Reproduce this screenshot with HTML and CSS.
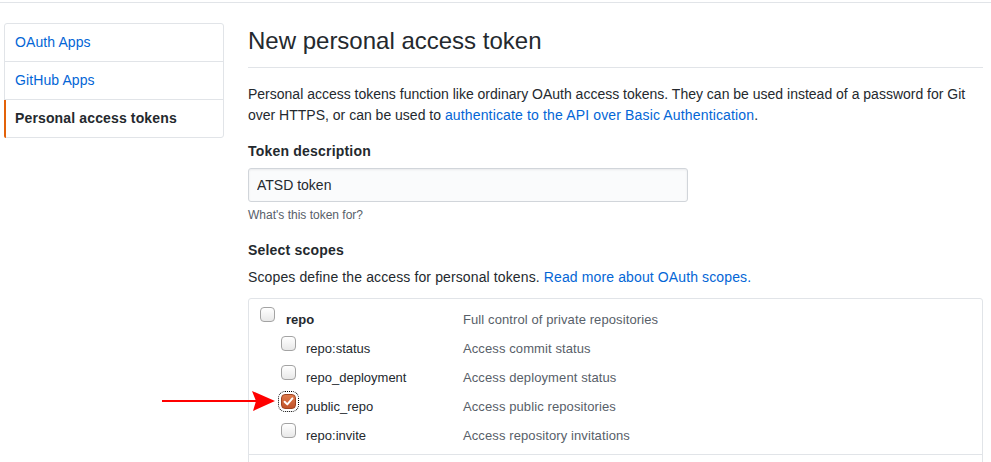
FILE: index.html
```html
<!DOCTYPE html>
<html lang="en">
<head>
<meta charset="utf-8">
<title>New personal access token</title>
<link rel="stylesheet" href="styles.css">
</head>
<body>
<div class="topbar"></div>
<div class="layout">
  <nav class="menu">
    <a class="menu-item" href="#">OAuth Apps</a>
    <a class="menu-item" href="#">GitHub Apps</a>
    <a class="menu-item selected" href="#">Personal access tokens</a>
  </nav>
  <main class="content">
    <h2 class="subhead">New personal access token</h2>
    <p class="intro">Personal access tokens function like ordinary OAuth access tokens. They can be used instead of a password for Git over HTTPS, or can be used to <a class="intro-link" href="#">authenticate to the API over Basic Authentication</a>.</p>
    <label class="field-label" for="desc">Token description</label>
    <input class="field-input" id="desc" type="text" value="ATSD token">
    <p class="note">What's this token for?</p>
    <h3 class="scopes-title">Select scopes</h3>
    <p class="scopes-desc">Scopes define the access for personal tokens. <a href="#">Read more about OAuth scopes.</a></p>
    <div class="scopes">
      <div class="scope-group">
        <div class="scope-row">
          <div class="scope-name"><span class="cb"></span><span class="label-parent">repo</span></div>
          <div class="scope-desc">Full control of private repositories</div>
        </div>
        <div class="scope-row sub">
          <div class="scope-name"><span class="cb"></span><span>repo:status</span></div>
          <div class="scope-desc">Access commit status</div>
        </div>
        <div class="scope-row sub">
          <div class="scope-name"><span class="cb"></span><span>repo_deployment</span></div>
          <div class="scope-desc">Access deployment status</div>
        </div>
        <div class="scope-row sub">
          <div class="scope-name"><span class="cb checked"><svg width="11" height="11" viewBox="0 0 11 11"><polyline points="1.6,5.8 4.3,8.4 9.4,2.4" fill="none" stroke="#fff" stroke-width="2" stroke-linecap="round" stroke-linejoin="round"/></svg></span><span>public_repo</span></div>
          <div class="scope-desc">Access public repositories</div>
        </div>
        <div class="scope-row sub">
          <div class="scope-name"><span class="cb"></span><span>repo:invite</span></div>
          <div class="scope-desc">Access repository invitations</div>
        </div>
      </div>
      <div class="scope-group scope-group-next"></div>
    </div>
  </main>
</div>
<svg class="arrow" width="120" height="30" viewBox="0 0 120 30">
  <line x1="4" y1="15" x2="98" y2="15" stroke="#ff0000" stroke-width="2.2"/>
  <polygon points="94,5 117,15 95,25 98,15" fill="#ff0000"/>
</svg>
</body>
</html>
```
FILE: styles.css
```css
html, body {
  margin: 0;
  padding: 0;
  background: #fff;
}
body {
  position: relative;
  font-family: "Liberation Sans", Arial, Helvetica, sans-serif;
  font-size: 14px;
  line-height: 21px;
  color: #24292e;
  height: 462px;
  overflow: hidden;
}
a {
  color: #0366d6;
  text-decoration: none;
}
.topbar {
  height: 2px;
  border-bottom: 1px solid #e1e4e8;
}
.layout {
  display: flex;
  align-items: flex-start;
  gap: 24px;
  padding: 20px 8px 0 4px;
}
.menu {
  width: 220px;
  flex: none;
  box-sizing: border-box;
  border: 1px solid #e1e4e8;
  border-radius: 3px;
  display: flex;
  flex-direction: column;
}
.menu-item {
  position: relative;
  display: block;
  padding: 8px 10px;
  line-height: 21px;
  font-size: 14px;
  color: #0366d6;
  letter-spacing: 0.1px;
}
.menu-item + .menu-item {
  border-top: 1px solid #e1e4e8;
}
.menu-item.selected {
  color: #24292e;
  font-weight: bold;
  letter-spacing: 0.14px;
}
.menu-item.selected::before {
  content: "";
  position: absolute;
  left: -1px;
  top: 0;
  bottom: -1px;
  width: 2px;
  background: #e36209;
  border-bottom-left-radius: 3px;
}
.content {
  width: 735px;
  flex: none;
}
.subhead {
  margin: 0 0 16px;
  padding-bottom: 8px;
  font-size: 24px;
  line-height: 36px;
  font-weight: normal;
  border-bottom: 1px solid #e1e4e8;
}
.intro {
  margin: 0 0 15px;
}
.intro-link {
  letter-spacing: 0.15px;
}
.field-label {
  display: block;
  font-weight: bold;
  margin-bottom: 6px;
  letter-spacing: 0.2px;
}
.field-input {
  display: block;
  box-sizing: border-box;
  width: 440px;
  height: 34px;
  margin: 0;
  padding: 6px 8px;
  font-family: "Liberation Sans", Arial, Helvetica, sans-serif;
  font-size: 14px;
  color: #24292e;
  background: #fafbfc;
  border: 1px solid #d1d5da;
  border-radius: 3px;
  box-shadow: inset 0 1px 2px rgba(27, 31, 35, 0.075);
  outline: none;
}
.note {
  margin: 4px 0 0;
  font-size: 12px;
  line-height: 18px;
  color: #586069;
}
.scopes-title {
  margin: 16px 0 6px;
  font-size: 14px;
  line-height: 21px;
  font-weight: bold;
  letter-spacing: 0.2px;
}
.scopes-desc {
  margin: 0 0 10px;
  letter-spacing: 0.12px;
}
.scopes {
  border: 1px solid #e1e4e8;
  border-radius: 3px;
}
.scope-group {
  padding: 6px 0 4px;
}
.scope-group + .scope-group {
  border-top: 1px solid #e1e4e8;
}
.scope-group-next {
  height: 40px;
  box-sizing: border-box;
}
.scope-row {
  display: flex;
  height: 29px;
  font-size: 13px;
  line-height: 29px;
}
.scope-name {
  width: 214px;
  flex: none;
  box-sizing: border-box;
  display: flex;
  align-items: flex-start;
  gap: 11px;
  padding-left: 11px;
}
.scope-row.sub .scope-name {
  padding-left: 32px;
  gap: 10px;
}
.label-parent {
  font-weight: bold;
}
.scope-desc {
  color: #586069;
  letter-spacing: 0.1px;
}
.cb {
  flex: none;
  box-sizing: border-box;
  width: 15px;
  height: 15px;
  margin-top: 2px;
  border: 1px solid #a3a3a3;
  border-radius: 4px;
  background: linear-gradient(#ffffff, #e8e8e8);
  display: flex;
  align-items: center;
  justify-content: center;
}
.cb.checked {
  border-color: #9f4421;
  background: linear-gradient(#de7a4c, #c2542a);
  outline: 1px dotted #000;
  outline-offset: 2px;
}
.arrow {
  position: absolute;
  left: 158px;
  top: 386px;
}
```
